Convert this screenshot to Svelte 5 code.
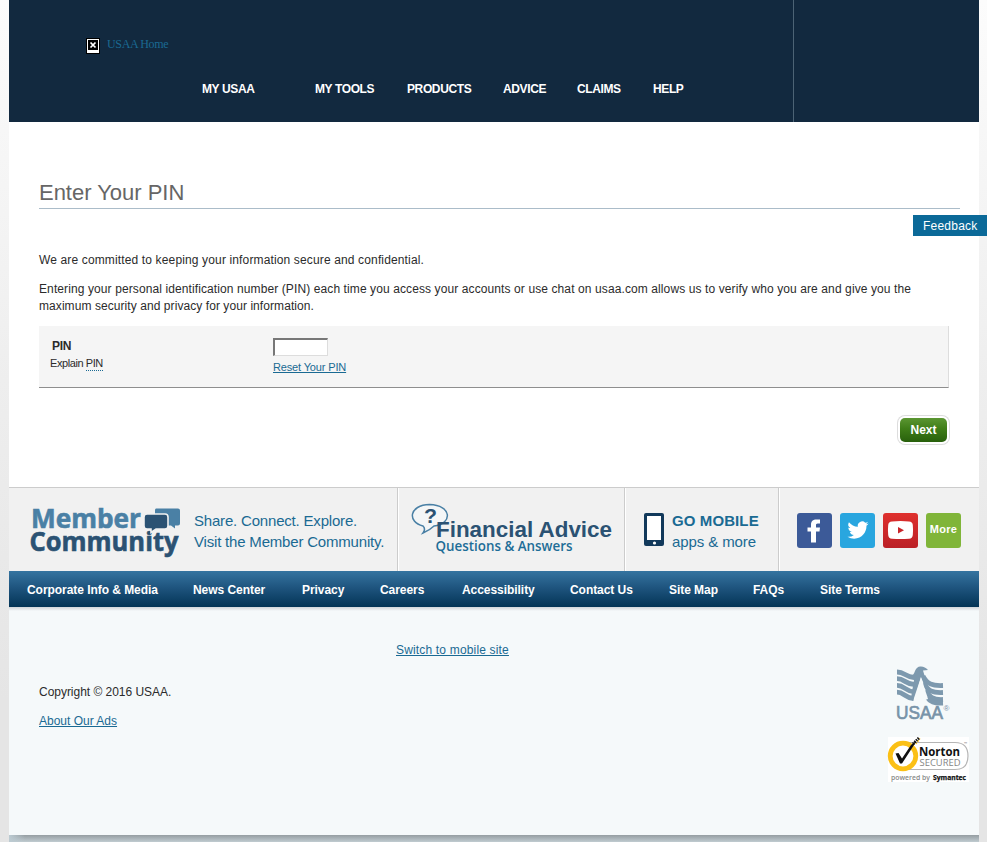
<script>
  const mainNav = [
    { label: 'MY USAA', width: 113 },
    { label: 'MY TOOLS', width: 92 },
    { label: 'PRODUCTS', width: 96 },
    { label: 'ADVICE', width: 74 },
    { label: 'CLAIMS', width: 76 },
    { label: 'HELP', width: 40 }
  ];
  const footerNav = [
    { label: 'Corporate Info & Media', width: 166 },
    { label: 'News Center', width: 109 },
    { label: 'Privacy', width: 78 },
    { label: 'Careers', width: 82 },
    { label: 'Accessibility', width: 108 },
    { label: 'Contact Us', width: 99 },
    { label: 'Site Map', width: 84 },
    { label: 'FAQs', width: 67 },
    { label: 'Site Terms', width: 70 }
  ];
  let pin = $state('');
</script>

<div class="backdrop">
  <div class="page">
    <header>
      <div class="brand-area">
        <a class="home" href="#home">
          <svg width="14" height="16" viewBox="0 0 14 16">
            <rect width="14" height="16" fill="#000" />
            <rect x="1" y="1" width="12" height="14" fill="#fff" />
            <rect x="2" y="2" width="10" height="10" fill="#000" />
            <path d="M4.500 4.500l5 5M9.500 4.500l-5 5" stroke="#fff" stroke-width="1.7" />
          </svg>
          <span>USAA Home</span>
        </a>
        <nav class="main-nav">
          {#each mainNav as item}
            <a href="#nav" style="width: {item.width}px">{item.label}</a>
          {/each}
        </nav>
      </div>
      <div class="header-side"></div>
    </header>

    <main>
      <h1>Enter Your PIN</h1>
      <p class="first">We are committed to keeping your information secure and confidential.</p>
      <p class="second">
        <span class="l1">Entering your personal identification number (PIN) each time you access your accounts or use chat on usaa.com allows us to verify who you are and give you the</span><br />
        <span class="l2">maximum security and privacy for your information.</span>
      </p>
      <form>
        <div class="label-col">
          <label for="pin">PIN</label>
          <div class="explain">Explain <span>PIN</span></div>
        </div>
        <div class="field-col">
          <input id="pin" type="password" bind:value={pin} />
          <a href="#reset">Reset Your PIN</a>
        </div>
      </form>
      <div class="actions"><button type="button">Next</button></div>
    </main>

    <section class="promos">
      <div class="promo community">
        <svg width="152" height="58" viewBox="0 0 152 58">
          <g font-family="'Open Sans', 'Noto Sans', sans-serif" font-weight="700" stroke-width=".6">
            <text x="2" y="29" font-size="27" fill="#4a80a5" stroke="#4a80a5" textLength="110" lengthAdjust="spacingAndGlyphs">Member</text>
            <text x="0.500" y="52" font-size="27" fill="#2b5273" stroke="#2b5273" textLength="149" lengthAdjust="spacingAndGlyphs">Community</text>
          </g>
          <path d="M127 9.500h22q2 0 2 2v13q0 2-2 2h-3v3l-4-3h-14q-2 0-2-2V11.500q0-2 1-2z" fill="#4a80a5" />
          <path d="M118 15h18q3 0 3 3v9q0 3-3 3h-9l-5 3.500v-3.500h-4q-3 0-3-3v-9q0-3 3-3z" fill="#2b5273" stroke="#f1f1f1" stroke-width="1.6" />
        </svg>
        <div class="promo-text"><span>Share. Connect. Explore.</span><span>Visit the Member Community.</span></div>
      </div>
      <div class="promo advice">
        <svg width="204" height="56" viewBox="0 0 204 56">
          <path d="M12 24C-4 20-2 3 18.500 2.500 41 3 42 22 23 24q-4 4-11 7 3-4 0-7z" fill="#f4f6f7" stroke="#4a80a5" stroke-width="1.5" />
          <text x="13" y="21" font-family="'Liberation Sans', sans-serif" font-size="20" font-weight="700" fill="#2b5273" textLength="13" lengthAdjust="spacingAndGlyphs">?</text>
          <text x="25" y="34.500" font-family="'Liberation Sans', sans-serif" font-size="22.500" font-weight="700" fill="#2b5273" textLength="176" lengthAdjust="spacingAndGlyphs">Financial Advice</text>
          <text x="24.500" y="49" font-family="'Open Sans', 'Noto Sans', sans-serif" font-size="14.500" font-weight="600" fill="#1d6d97" textLength="137" lengthAdjust="spacingAndGlyphs">Questions &amp; Answers</text>
        </svg>
      </div>
      <div class="promo mobile">
        <svg width="20" height="33" viewBox="0 0 20 33">
          <rect width="20" height="33" rx="2" fill="#12395b" />
          <rect x="3" y="3" width="14" height="24" fill="#fff" />
          <circle cx="10.500" cy="30" r="1.600" fill="#fff" />
        </svg>
        <div class="promo-text"><b>GO MOBILE</b><span class="apps">apps &amp; more</span></div>
      </div>
      <div class="promo social">
        <svg width="35" height="35" viewBox="0 0 35 35">
          <rect width="35" height="35" rx="3" fill="#3c5a98" />
          <path d="M14 29.500V18.500h-3.500v-4H14v-2.500c0-4 2-5.500 5.500-5.500h3.500v4h-2.200c-1.500 0-1.800.7-1.800 1.800v2.200h4l-.5 4H19v11z" fill="#fff" />
        </svg>
        <svg width="35" height="35" viewBox="0 0 35 35">
          <rect width="35" height="35" rx="3" fill="#29a6df" />
          <path transform="translate(7.500 6.500) scale(.88)" d="M23.950 4.570a10 10 0 0 1-2.820.77 4.960 4.960 0 0 0 2.160-2.720c-.95.550-2 .950-3.130 1.180a4.920 4.920 0 0 0-8.380 4.480A13.930 13.930 0 0 1 1.640 3.160a4.920 4.920 0 0 0 1.520 6.570 4.900 4.900 0 0 1-2.230-.61v.06a4.920 4.920 0 0 0 3.950 4.830 5 5 0 0 1-2.210.08 4.940 4.940 0 0 0 4.600 3.420A9.870 9.870 0 0 1 0 19.540a14 14 0 0 0 7.550 2.210c9.050 0 14-7.500 14-13.980 0-.21 0-.42-.02-.63a9.940 9.940 0 0 0 2.460-2.550z" fill="#fff" />
        </svg>
        <svg width="35" height="35" viewBox="0 0 35 35">
          <defs><linearGradient id="tube" x2="0" y2="1"><stop stop-color="#df302d" /><stop offset="1" stop-color="#bb2026" /></linearGradient></defs>
          <rect width="35" height="35" rx="3" fill="url(#tube)" />
          <path d="M9 8.500q8.500-.8 17 0 3.500.2 3.800 3.500.5 5 0 10-.3 3.500-3.800 3.700-8.500.8-17 0-3.500-.2-3.800-3.700-.5-5 0-10 .3-3.300 3.800-3.500z" fill="#fff" />
          <path d="M15 14l6 3.200-6 3.300z" fill="#c9252a" />
        </svg>
        <a class="more" href="#more">More</a>
      </div>
    </section>

    <nav class="footer-nav">
      {#each footerNav as item}
        <a href="#footer" style="width: {item.width}px">{item.label}</a>
      {/each}
    </nav>

    <footer>
      <div class="switch"><a href="#mobile">Switch to mobile site</a></div>
      <div class="legal">
        <div class="copy">
          <p>Copyright © 2016 USAA.</p>
          <a href="#ads">About Our Ads</a>
        </div>
        <div class="seals">
          <svg width="56" height="56" viewBox="0 0 56 56">
            <g fill="none" stroke="#7d99ae" stroke-width="4.800">
              <path d="M1 7c8 0 8 5 17 5.500" />
              <path d="M1 13.700c8 0 8 5.500 18 6" />
              <path d="M1 20.400c8 0 8 6 17.500 6.500" />
              <path d="M1 27.100c7 0 8 6 16.500 6.500" />
              <path d="M27 11c4 8 9 10 20 9.500" />
              <path d="M28 18c4 8 8 10 19 9.500" />
              <path d="M30 25c3 7 7 10 17 9.500" />
              <path d="M31 32c3 5 7 6.500 16 6" />
            </g>
            <path d="M13 10q4 2 6-4 2-5 6-4.500 4 0 7 3.500l-5 .5 7 23-1 4L25 12 17 36l-2-3L18 15z" fill="#7d99ae" />
            <path d="M25 12l7 22-6 2-7-2z" fill="#f5f9fa" />
            <text x="0" y="54" font-family="'Liberation Sans', sans-serif" font-size="19" fill="#7893a8" stroke="#7893a8" stroke-width=".7" textLength="47" lengthAdjust="spacingAndGlyphs">USAA</text>
            <text x="47.500" y="46" font-family="'Liberation Sans', sans-serif" font-size="8" fill="#7893a8">®</text>
          </svg>
          <svg class="norton" width="81" height="45" viewBox="0 0 81 45">
            <rect width="81" height="45" fill="#fff" />
            <path d="M20 5.500h47q13 0 13 13.500T67 32.500H20" fill="#fff" stroke="#b5b5b5" stroke-width="1.200" />
            <circle cx="15" cy="19" r="12.800" fill="#fff" stroke="#fbc015" stroke-width="4.800" />
            <path d="M7.500 16.500l3-.5 3.500 5.500L23 8l5-4-2 4-12 18.500h-2z" fill="#111" />
            <path d="M25 7L31 1" stroke="#111" stroke-width="3" stroke-dasharray="1.500 .8" />
            <path d="M28 7L32 1.500" stroke="#fbc015" stroke-width="1.200" stroke-dasharray="1.500 1.500" />
            <g font-family="'Open Sans', 'Noto Sans', sans-serif">
              <text x="31" y="19" font-size="13" font-weight="700" fill="#111" textLength="41" lengthAdjust="spacingAndGlyphs">Norton</text>
              <text x="31.500" y="28.500" font-size="9.500" fill="#858585" textLength="41" lengthAdjust="spacingAndGlyphs">SECURED</text>
              <text x="3" y="43" font-size="7" font-weight="600" fill="#888" textLength="39" lengthAdjust="spacingAndGlyphs">powered by</text>
              <text x="45" y="43" font-size="7" font-weight="700" fill="#111" stroke="#111" stroke-width=".25" textLength="33" lengthAdjust="spacingAndGlyphs">Symantec</text>
              <text x="76" y="8" font-size="4" fill="#777">™</text>
            </g>
          </svg>
        </div>
      </div>
    </footer>
    <div class="page-shadow"></div>
  </div>
  <a class="feedback" href="#feedback">Feedback</a>
</div>

<style>
  :global(body) { margin: 0; overflow: hidden; }
  .backdrop {
    position: relative;
    box-sizing: border-box;
    width: 987px;
    height: 842px;
    padding-left: 9px;
    background: linear-gradient(#fcfcfc 0, #f7f7f7 130px, #eee 380px, #e5e5e5 700px);
    font-family: 'Liberation Sans', Arial, sans-serif;
    font-size: 12px;
    color: #2b2b2b;
    overflow: hidden;
  }
  .page { width: 970px; background: #fff; }
  a { color: #1a6a93; }
  svg { flex: none; overflow: visible; }
  header { display: flex; height: 122px; background: #12293f; }
  .brand-area { width: 784px; }
  .header-side { flex: 1; border-left: 1px solid #4c6375; }
  .home { display: flex; gap: 7px; height: 44px; padding: 38px 0 0 77px; text-decoration: none; font: 12px/13px 'Liberation Serif', serif; }
  .home span { letter-spacing: -.35px; }
  .main-nav { display: flex; padding-left: 193px; letter-spacing: -.38px; }
  .main-nav a, .footer-nav a { flex: none; color: #fff; font-weight: 700; text-decoration: none; line-height: 14px; white-space: nowrap; }
  main { height: 365px; padding: 57px 30px 0; box-sizing: border-box; }
  h1 { margin: 0 -11px 0 0; width: 921px; height: 29px; border-bottom: 1px solid #abbcc9; font-size: 22px; line-height: 27px; font-weight: 400; color: #666; letter-spacing: -.02px; }
  p { margin: 0; line-height: 17px; white-space: nowrap; }
  .first { margin-top: 43px; letter-spacing: .14px; }
  .second { margin-top: 12px; }
  .l1 { letter-spacing: .103px; }
  .l2 { letter-spacing: .07px; }
  form { display: flex; box-sizing: border-box; width: 910px; height: 62px; margin-top: 11px; background: #f5f5f5; border-right: 1px solid #ddd; border-bottom: 1px solid #8e8e8e; }
  .label-col { width: 223px; padding: 13px 0 0 11px; }
  label { display: block; margin-left: 2px; font-weight: 700; line-height: 14px; letter-spacing: -.3px; }
  .explain { margin-top: 4px; font-size: 11px; line-height: 13px; letter-spacing: -.42px; }
  .explain span { display: inline-block; border-bottom: 1px dotted #1a6a93; }
  .field-col { padding-top: 12px; }
  input { display: block; box-sizing: border-box; width: 55px; height: 18px; padding: 0; border: 1px solid; border-width: 2px 1px 1px 2px; border-color: #777 #ddd #ddd #777; background: #fff; outline: 0; }
  .field-col a { display: block; margin-top: 5px; font-size: 11px; line-height: 13px; letter-spacing: -.15px; }
  .actions { display: flex; justify-content: flex-end; padding-top: 30px; }
  button { width: 47px; height: 24px; padding: 0; margin-right: 2px; border: 0; border-radius: 5px; box-shadow: 0 0 0 2px #fff, 0 0 0 3px #ddd; background: linear-gradient(#5b9632, #3f7d18 45%, #28600c); color: #fff; font: 700 12px/24px 'Liberation Sans', sans-serif; }
  .promos { display: flex; height: 83px; border-top: 1px solid #ccc; background: #f1f1f1; }
  .promo { display: flex; box-sizing: border-box; border-right: 1px solid #ccc; box-shadow: 1px 0 #fff; }
  .community { width: 389px; padding: 11px 0 0 20px; gap: 13px; }
  .promo-text { display: flex; flex-direction: column; font-size: 15px; line-height: 21px; color: #1a6a93; white-space: nowrap; }
  .community .promo-text { padding-top: 11px; letter-spacing: -.19px; }
  .advice { width: 227px; padding: 14px 0 0 13px; }
  .mobile { width: 154px; padding: 25px 0 0 19px; gap: 8px; }
  .mobile .promo-text { margin-top: -3px; }
  .mobile b { letter-spacing: .1px; }
  .apps { letter-spacing: -.1px; }
  .social { flex: 1; gap: 8px; padding: 25px 0 0 18px; border: 0; box-shadow: none; }
  .more { width: 35px; height: 35px; border-radius: 3px; background: #80b539; color: #fff; font-weight: 700; font-size: 11px; line-height: 33px; letter-spacing: .3px; text-align: center; text-decoration: none; }
  .footer-nav { display: flex; height: 24px; padding: 12px 0 0 18px; letter-spacing: -.05px; background: linear-gradient(#3574a0, #1f557f 45%, #033456); }
  footer { height: 228px; background: linear-gradient(#cfd5da, #f5f9fa 4px); }
  .switch { padding: 36px 0 0 387px; height: 22px; line-height: 15px; letter-spacing: .17px; }
  .legal { display: flex; justify-content: space-between; padding-left: 30px; }
  .copy { padding-top: 19px; line-height: 17px; }
  .copy p { margin-bottom: 12px; letter-spacing: -.03px; }
  .seals { width: 91px; display: flex; flex-direction: column; }
  .seals svg:first-child { margin-left: 8px; }
  .norton { margin-top: 16px; }
  .page-shadow { height: 7px; background: linear-gradient(90deg, #bccbd2, transparent 16px), linear-gradient(#959ea2, #c0cbd0); }
  .feedback { position: absolute; top: 215px; right: 0; width: 74px; height: 21px; box-sizing: border-box; padding-left: 10px; background: #0b6998; color: #fff; font: 12px/22px 'Liberation Sans', sans-serif; letter-spacing: .22px; text-decoration: none; }
</style>
